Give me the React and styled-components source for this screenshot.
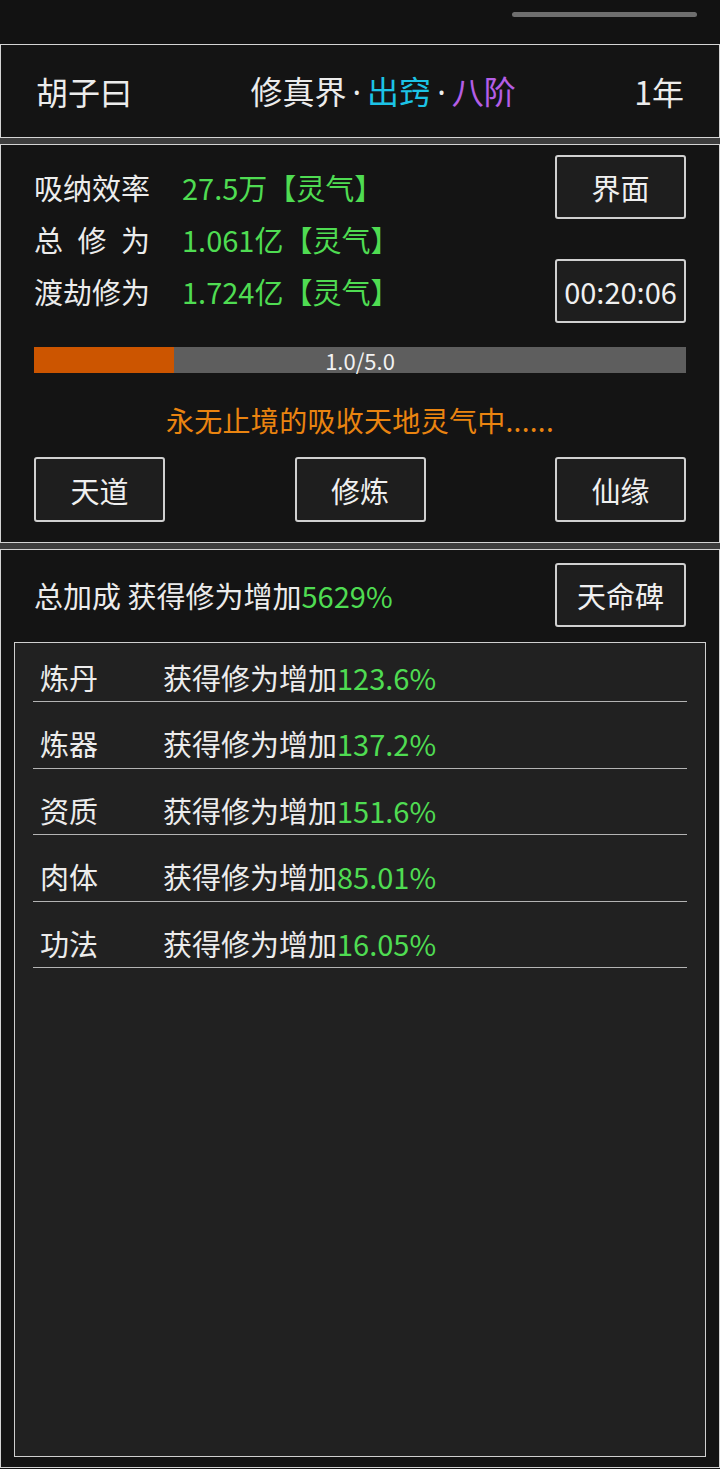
import React from 'react'
import styled, { createGlobalStyle } from 'styled-components'

const stats = [
    { label: '吸纳效率', value: '27.5万【灵气】' },
    { label: '总修为', value: '1.061亿【灵气】', spread: true },
    { label: '渡劫修为', value: '1.724亿【灵气】' },
]

const bonuses = [
    { name: '炼丹', value: '123.6%' },
    { name: '炼器', value: '137.2%' },
    { name: '资质', value: '151.6%' },
    { name: '肉体', value: '85.01%' },
    { name: '功法', value: '16.05%' },
]

const progress = { current: 1.0, max: 5.0 }

const App = () => {
    const pct = (progress.current / progress.max) * 100 + 1.4
    return (
        <>
            <GlobalStyle />
            <Page>
                <TopBar>
                    <Handle />
                </TopBar>
                <Panel>
                    <HeaderRow>
                        <span>胡子曰</span>
                        <span>
                            修真界<Dot>·</Dot><Tint color="#1cc3e6">出窍</Tint><Dot>·</Dot>
                            <Tint color="#b45ee6">八阶</Tint>
                        </span>
                        <span>1年</span>
                    </HeaderRow>
                </Panel>
                <Gap />
                <Panel>
                    <StatsArea>
                        <StatList>
                            {stats.map((s) => (
                                <StatRow key={s.label}>
                                    <StatLabel spread={s.spread}>
                                        {s.spread
                                            ? s.label.split('').map((c) => <span key={c}>{c}</span>)
                                            : s.label}
                                    </StatLabel>
                                    <Green>{s.value}</Green>
                                </StatRow>
                            ))}
                        </StatList>
                        <SideButtons>
                            <Button>界面</Button>
                            <Button>00:20:06</Button>
                        </SideButtons>
                    </StatsArea>
                    <Bar>
                        <BarFill style={{ width: `${pct}%` }} />
                        <BarText>
                            {progress.current.toFixed(1)}/{progress.max.toFixed(1)}
                        </BarText>
                    </Bar>
                    <Status>永无止境的吸收天地灵气中......</Status>
                    <ActionRow>
                        <Button>天道</Button>
                        <Button>修炼</Button>
                        <Button>仙缘</Button>
                    </ActionRow>
                </Panel>
                <Gap />
                <Panel grow>
                    <TotalRow>
                        <TotalText>
                            总加成 获得修为增加<Green>5629%</Green>
                        </TotalText>
                        <Button>天命碑</Button>
                    </TotalRow>
                    <ListBox>
                        {bonuses.map((b) => (
                            <ListRow key={b.name}>
                                <RowName>{b.name}</RowName>
                                <span>
                                    获得修为增加<Green>{b.value}</Green>
                                </span>
                            </ListRow>
                        ))}
                    </ListBox>
                </Panel>
            </Page>
        </>
    )
}

export default App

const GlobalStyle = createGlobalStyle`
    body {
        margin: 0;
        background: #141414;
        font-family: "Noto Sans CJK SC", "Noto Sans", sans-serif;
        color: #ececec;
    }
`
const Page = styled.div`
    width: 720px;
    height: 1469px;
    display: flex;
    flex-direction: column;
    background: #141414;
`
const TopBar = styled.div`
    height: 44px;
    display: flex;
    justify-content: flex-end;
    padding: 12px 23px 0 0;
    box-sizing: border-box;
    background: #121212;
`
const Handle = styled.div`
    width: 185px;
    height: 5px;
    border-radius: 3px;
    background: #6e6e6e;
`
const Panel = styled.div`
    border: 1.5px solid #d4d4d4;
    background: #141414;
    padding: 10px 33px 20px 33px;
    display: flex;
    flex-direction: column;
    ${(p) => p.grow && `flex: 1; padding: 13px 13px 10px 13px; margin-bottom: 1px;`}
`
const Gap = styled.div`
    height: 6px;
    background: #3d3d3d;
`
const HeaderRow = styled.div`
    height: 92px;
    margin-top: -10px;
    margin-bottom: -20px;
    padding: 0 2px;
    display: flex;
    align-items: center;
    justify-content: space-between;
    font-size: 32px;
    line-height: 1;
    span {
        white-space: nowrap;
    }
`
const Dot = styled.span`
    font-family: "Noto Sans", sans-serif;
    margin: 0 6px;
`
const Tint = styled.span`
    color: ${(p) => p.color};
`
const StatsArea = styled.div`
    display: flex;
    justify-content: space-between;
`
const StatList = styled.div`
    padding-top: 6px;
    display: flex;
    flex-direction: column;
`
const StatRow = styled.div`
    height: 52px;
    display: flex;
    align-items: center;
    font-size: 29px;
`
const StatLabel = styled.span`
    width: 148px;
    display: flex;
    justify-content: ${(p) => (p.spread ? 'space-between' : 'flex-start')};
    padding-right: ${(p) => (p.spread ? '32px' : '0')};
    box-sizing: border-box;
`
const Green = styled.span`
    color: #4fdc52;
`
const SideButtons = styled.div`
    display: flex;
    flex-direction: column;
    gap: 40px;
`
const Button = styled.div`
    width: 131px;
    height: 64px;
    box-sizing: border-box;
    border: 2px solid #d0d0d0;
    border-radius: 3px;
    background: #1e1e1e;
    display: flex;
    align-items: center;
    justify-content: center;
    font-size: 29px;
    color: #f0f0f0;
    white-space: nowrap;
`
const Bar = styled.div`
    position: relative;
    margin-top: 24px;
    height: 26px;
    background: #5e5e5e;
    display: flex;
    align-items: center;
    justify-content: center;
`
const BarFill = styled.div`
    position: absolute;
    left: 0;
    top: 0;
    bottom: 0;
    background: #cc5500;
`
const BarText = styled.span`
    position: relative;
    font-size: 22px;
    line-height: 1;
    color: #f2f2f2;
`
const Status = styled.div`
    margin-top: 32px;
    text-align: center;
    font-size: 28px;
    line-height: 30px;
    color: #ea8410;
    letter-spacing: 0.3px;
`
const ActionRow = styled.div`
    margin-top: 22px;
    display: flex;
    justify-content: space-between;
    ${Button} {
        height: 65px;
    }
`
const TotalRow = styled.div`
    display: flex;
    align-items: center;
    justify-content: space-between;
    padding: 0 20px;
`
const TotalText = styled.span`
    font-size: 29px;
`
const ListBox = styled.div`
    flex: 1;
    margin-top: 15px;
    border: 1.5px solid #d0d0d0;
    background: #212121;
    padding: 0 18px;
    display: flex;
    flex-direction: column;
`
const ListRow = styled.div`
    height: 59px;
    box-sizing: border-box;
    padding: 9px 0 0 7px;
    border-bottom: 1.5px solid #b4b4b4;
    display: flex;
    align-items: center;
    font-size: 29px;
    & + & {
        height: 58px;
        padding-top: 8px;
        margin-top: 8.5px;
    }
`
const RowName = styled.span`
    width: 123px;
`
